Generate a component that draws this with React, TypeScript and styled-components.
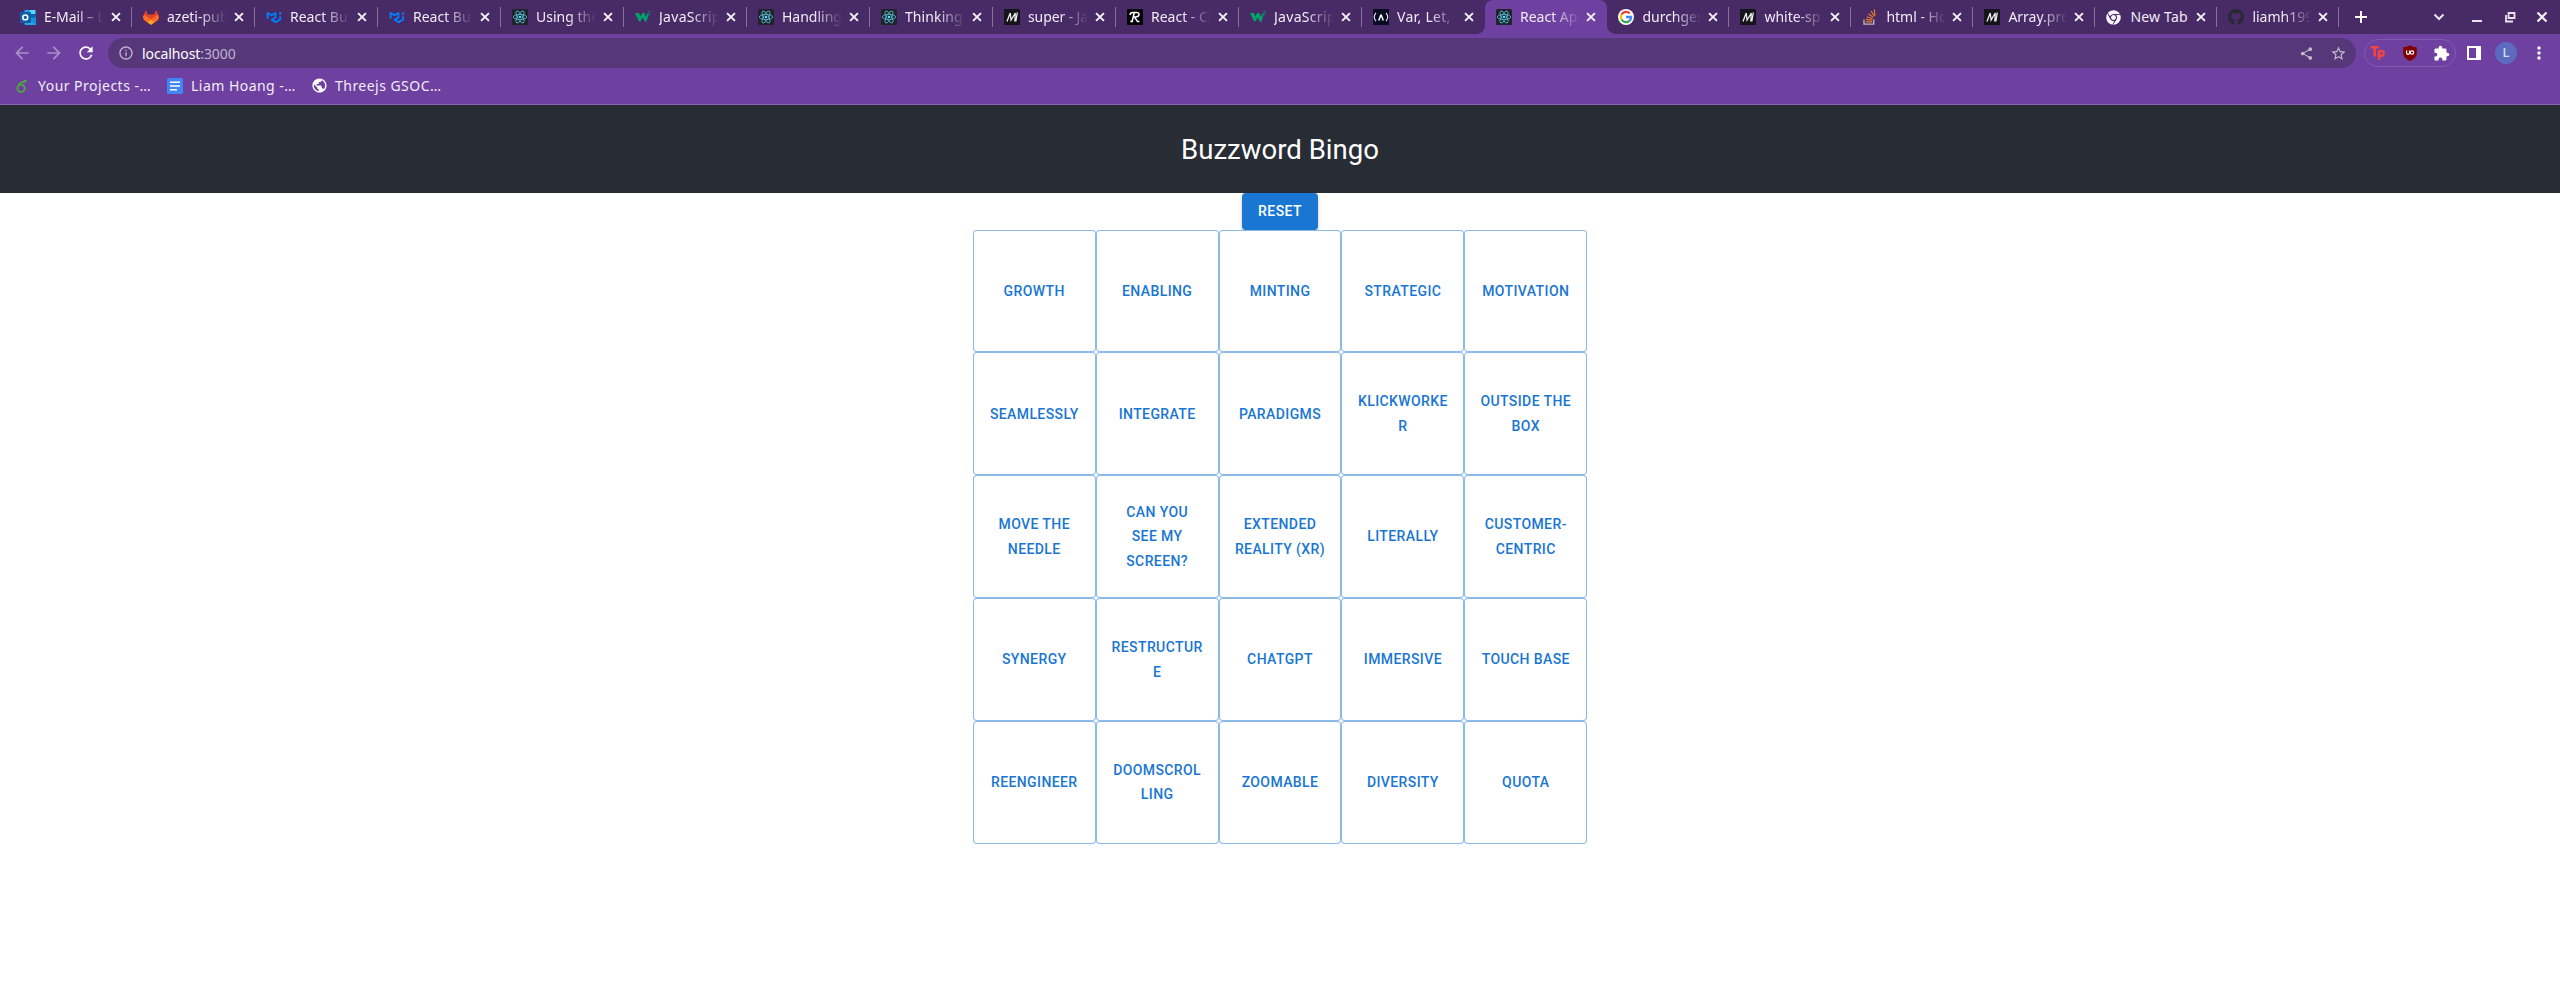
import React from "react";
import styled, { createGlobalStyle, css } from "styled-components";
import {
  MdArrowBack, MdArrowForward, MdRefresh, MdInfoOutline, MdShare, MdStarBorder,
  MdExtension, MdMoreVert, MdPublic,
} from "react-icons/md";
import { FaGithub, FaChrome } from "react-icons/fa";

const GlobalStyle = createGlobalStyle`
  * { box-sizing: border-box; }
  html, body { margin: 0; background: #fff; }
  body { overflow: hidden; }
  svg { display: block; flex: none; }
`;

const uiFont = `"Noto Sans", "Open Sans", sans-serif`;

const Browser = styled.div`
  font-family: ${uiFont};
  font-size: 14px;
  color: #f1ecf6;
`;

/* ---- tab strip ---- */

const TabStrip = styled.div`
  display: flex;
  height: 34px;
  padding-left: 8.6px;
  background: #472a66;
`;

const TabTitle = styled.span<{ $ls: number; $fade: boolean }>`
  flex: 1;
  min-width: 0;
  margin: 0 6px 0 8px;
  overflow: hidden;
  white-space: nowrap;
  line-height: 20px;
  letter-spacing: ${(p) => p.$ls}px;
  ${(p) => p.$fade && css`mask-image: linear-gradient(to right, #000 32px, transparent 60px);`}
`;

const Tab = styled.div<{ $w: number; $active?: boolean; $line?: boolean }>`
  position: relative;
  display: flex;
  align-items: center;
  flex: none;
  width: ${(p) => p.$w}px;
  padding: 0 ${(p) => (p.$w < 123 ? 9 : 8.6)}px 0 11.4px;
  height: 34px;
  ${(p) => p.$line && css`
    &::after {
      content: "";
      position: absolute;
      right: -0.4px;
      top: 7px;
      width: 1px;
      height: 20px;
      background: #85719b;
    }
  `}
  ${(p) => p.$active && css`
    background: #6e41a1;
    border-radius: 8px 8px 0 0;
    &::before, &::after {
      content: "";
      position: absolute;
      bottom: 0;
      width: 8px;
      height: 8px;
    }
    &::before {
      left: -8px;
      background: radial-gradient(circle at 0 0, transparent 7.5px, #6e41a1 8px);
    }
    &::after {
      right: -8px;
      background: radial-gradient(circle at 100% 0, transparent 7.5px, #6e41a1 8px);
    }
  `}
`;

const TabClose = styled.span`
  display: flex;
`;

const NewTab = styled.div`
  display: flex;
  align-items: center;
  margin-left: 14px;
  color: #fff;
`;

const WindowControls = styled.div`
  display: flex;
  align-items: center;
  margin-left: auto;
`;

const ControlSlot = styled.span<{ $w: number }>`
  display: flex;
  justify-content: center;
  width: ${(p) => p.$w}px;
`;

/* ---- toolbar ---- */

const Toolbar = styled.div`
  display: flex;
  align-items: center;
  height: 38px;
  background: #6e41a1;
`;

const NavButtons = styled.div`
  display: flex;
  gap: 12px;
  padding-left: 12px;
  width: 108px;
  color: #fff;
`;

const NavButton = styled.span<{ $off?: boolean }>`
  color: ${(p) => (p.$off ? "#ab8fcb" : "#fff")};
`;

const Omnibox = styled.div`
  display: flex;
  align-items: center;
  width: 2248px;
  height: 30px;
  padding: 0 9px 0 10px;
  border-radius: 15px;
  background: #56377a;
  color: #c0b4cc;
`;

const Url = styled.span`
  flex: 1;
  margin-left: 8px;
  letter-spacing: -0.1px;
  b { font-weight: 400; color: #fff; }
`;

const OmniboxActions = styled.span`
  display: flex;
  align-items: center;
  gap: 16px;
  color: #c3bccb;
`;

const Extensions = styled.div`
  display: flex;
  align-items: center;
  justify-content: space-between;
  width: 92px;
  height: 28px;
  margin-left: 8px;
  padding: 0 5px;
  border: 1px solid #8259b0;
  border-radius: 14px;
  color: #fff;
`;

const Avatar = styled.span`
  display: flex;
  align-items: center;
  justify-content: center;
  width: 22px;
  height: 22px;
  margin: 0 12px 0 14px;
  border-radius: 50%;
  background: #5c6bc0;
  color: #d8dcf0;
  font: 12px Roboto, sans-serif;
  font-weight: 500;
`;

const PanelIcon = styled.span`
  width: 14px;
  height: 14px;
  margin-left: 11px;
  border: 2px solid #fff;
  border-right-width: 5px;
`;

/* ---- bookmarks ---- */

const Bookmarks = styled.div`
  display: flex;
  height: 33px;
  align-items: flex-start;
  padding: 3px 0 0 16px;
  border-bottom: 1px solid #8b67b4;
  background: #6e41a1;
`;

const Bookmark = styled.div<{ $w: number; $gap: number }>`
  display: flex;
  align-items: center;
  gap: ${(p) => p.$gap}px;
  width: ${(p) => p.$w}px;
  height: 21px;
  white-space: nowrap;
  letter-spacing: 0.47px;
`;

/* ---- page ---- */

const Page = styled.main`
  display: flex;
  flex-direction: column;
  align-items: center;
  font-family: Roboto, sans-serif;
`;

const Header = styled.header`
  display: flex;
  align-items: center;
  justify-content: center;
  width: 100%;
  height: 88px;
  background: #282c34;
  color: #fff;
  font-size: 27.56px;
`;

const buttonText = css`
  font: 500 14px/24.5px Roboto, sans-serif;
  letter-spacing: 0.4px;
  text-transform: uppercase;
`;

const ResetButton = styled.button`
  ${buttonText}
  height: 36.5px;
  padding: 6px 16px;
  border: 0;
  border-radius: 4px;
  background: #1976d2;
  color: #fff;
  box-shadow: 0 3px 1px -2px rgba(0, 0, 0, 0.2), 0 2px 2px rgba(0, 0, 0, 0.14),
    0 1px 5px rgba(0, 0, 0, 0.12);
`;

const Board = styled.div`
  display: grid;
  grid-template-columns: repeat(5, 122.88px);
  grid-auto-rows: 122.88px;
`;

const Cell = styled.button`
  ${buttonText}
  padding: 5px 14px;
  border: 1px solid rgba(25, 118, 210, 0.5);
  border-radius: 4px;
  background: #fff;
  color: #1976d2;
  overflow-wrap: anywhere;
  white-space: pre-line;
`;

/* ---- icons ---- */

const Svg = ({ children, size = 16 }: { children: React.ReactNode; size?: number }) => (
  <svg width={size} height={size} viewBox="0 0 16 16">{children}</svg>
);

const OutlookIcon = () => (
  <Svg>
    <path d="M4.500 1h5.500v4H4.500z" fill="#28a8ea" />
    <path d="M10 1h5.500v4H10z" fill="#50d9ff" />
    <path d="M4.500 5h5.500v4H4.500z" fill="#0364b8" />
    <path d="M10 5h5.500v5H10z" fill="#0a64b4" />
    <path d="M4.500 9H16v6a1 1 0 0 1-1 1H5.500a1 1 0 0 1-1-1z" fill="#28a8ea" />
    <path d="M16 7.500V15a1 1 0 0 1-.5.800L9.500 11.500z" fill="#1490df" />
    <rect x="0" y="3" width="11" height="11" rx="1" fill="#0f5ca8" />
    <circle cx="5.300" cy="8.400" r="2.400" fill="none" stroke="#fff" strokeWidth="1.600" />
  </Svg>
);

const GitlabIcon = () => (
  <Svg>
    <path d="M2.700.8L1.200 5 .2 7.500a4.500 4.500 0 0 0 1.500 4L8 15.800l6.300-4.300a4.500 4.500 0 0 0 1.500-4L13.300.8 11.200 5.500H4.800z" fill="#e24329" />
    <path d="M15.800 7.500l-.8-2L8 10.500 1 5.500l-.8 2a4.500 4.500 0 0 0 1.500 4L8 15.800l6.300-4.300a4.500 4.500 0 0 0 1.500-4z" fill="#fc6d26" />
    <path d="M4.500 13.300L8 10.700l3.500 2.600L8 15.800z" fill="#fca326" />
  </Svg>
);

const MuiIcon = () => (
  <Svg>
    <path d="M1.600 9.700V4l3.900 2.300L9.400 4v4.600L5.700 10.800l4 2.300 4.500-2.600V7.300" fill="none" stroke="#007fff" strokeWidth="1.900" strokeLinejoin="round" />
    <path d="M13.200 3.200h2v2.200l-2 .9z" fill="#007fff" />
  </Svg>
);

const ReactIcon = () => (
  <Svg>
    <rect width="16" height="16" rx="1.500" fill="#20232a" />
    <g fill="none" stroke="#53b9d1" strokeWidth=".85">
      <ellipse cx="8" cy="8" rx="6.700" ry="2.600" />
      <ellipse cx="8" cy="8" rx="6.700" ry="2.600" transform="rotate(60 8 8)" />
      <ellipse cx="8" cy="8" rx="6.700" ry="2.600" transform="rotate(120 8 8)" />
    </g>
    <circle cx="8" cy="8" r="1.300" fill="#61dafb" />
  </Svg>
);

const W3Icon = () => (
  <Svg>
    <path d="M0 4h4l1.400 3.600L7 4h2.300l1.700 3.800L12.300 4.500H14L11.300 13 9.600 12 7.500 8.500 5.500 12.500 3.800 12z" fill="#04a06a" />
    <path d="M13 2.500h2.200L14.100 4q1.300.1 1 1.200-.5.900-1.800.4" fill="none" stroke="#048a63" strokeWidth=".8" />
  </Svg>
);

const MdnIcon = () => (
  <Svg>
    <rect width="16" height="16" fill="#15141a" />
    <path d="M3 12.500L6.200 4l.9 7L11.300 4l-.5 8.500M13.300 3.500L11.800 12.500" fill="none" stroke="#ececee" strokeWidth="1.300" />
  </Svg>
);

const RIcon = () => (
  <Svg>
    <rect width="16" height="16" rx="1" fill="#000" />
    <path d="M3 6q0-2.500 3-2.500h3.500q2.700 0 2.500 2.200-.3 2.400-3.500 2.400h-1l3 4.400h2M7.200 4L5 12.700M3.300 12.600h2.800" fill="none" stroke="#fff" strokeWidth="1.500" />
  </Svg>
);

const CampIcon = () => (
  <Svg>
    <rect width="16" height="16" fill="#0a0a23" />
    <path d="M3 3.800q-3.500 4.200 0 8.400M13 3.800q3.500 4.200 0 8.400" fill="none" stroke="#e8e8ee" strokeWidth="1.100" />
    <path d="M5.800 11.500L7.700 6.200h.6l2 5.300" fill="none" stroke="#fff" strokeWidth="1.500" />
  </Svg>
);

const GoogleIcon = () => (
  <Svg>
    <circle cx="8" cy="8" r="8" fill="#fff" />
    <g fill="none" strokeWidth="2.300">
      <path d="M3.500 5.500A5.200 5.200 0 0 1 11.700 4.400" stroke="#ea4335" />
      <path d="M3.500 10.500A5.200 5.200 0 0 1 3.500 5.500" stroke="#fbbc05" />
      <path d="M11.400 11.900A5.200 5.200 0 0 1 3.500 10.500" stroke="#34a853" />
      <path d="M8 8h5.100A5.200 5.200 0 0 1 11.400 11.900" stroke="#4285f4" />
    </g>
  </Svg>
);

const StackIcon = () => (
  <Svg>
    <path d="M2 10.500v4.700h9.800v-4.700" fill="none" stroke="#bcbbbb" strokeWidth="1.300" />
    <path d="M3.800 12.900h6.300M4 10.400l6.200.8M4.700 7.700l5.900 2.100M6.300 4.700l5 3.700M9 2l3.400 5.200M12.200.5l.8 6" stroke="#f48024" strokeWidth="1.100" />
  </Svg>
);

const OverleafIcon = () => (
  <svg width="12" height="14" viewBox="0 0 12 14">
    <circle cx="5" cy="9.300" r="3.700" fill="none" stroke="#4fa83d" strokeWidth="1.800" />
    <path d="M1.400 8.500Q1.600 3.500 6 2.400 8.500.6 11 .7q-.5 3.400-4.500 3.300Q4.500 4 3.400 6" fill="#4fa83d" />
  </svg>
);

const DocsIcon = () => (
  <Svg>
    <rect width="16" height="16" rx="1.500" fill="#4285f4" />
    <path d="M3 4.200h10M3 8h10M3 11.800h7" stroke="#fff" strokeWidth="1.500" />
  </Svg>
);

const TpIcon = () => (
  <Svg>
    <path d="M.8 2.300h8M4.700 2v9.500M9 5.300V15M9 6.700q5-2 4.700 1.700-.4 3.300-4.400 2.200" fill="none" stroke="#f5433f" strokeWidth="2.500" />
  </Svg>
);

const ShieldIcon = () => (
  <Svg>
    <path d="M8 .2q3 1.900 6.800 2v6.300Q14.500 13 8 16 1.500 13 1.200 8.500V2.200Q5 2.100 8 .2z" fill="#800000" />
    <path d="M4.600 5.600v2.800q1.500 2 2.900 0V5.600" fill="none" stroke="#fff" strokeWidth="1.100" />
    <circle cx="10" cy="7.600" r="1.700" fill="none" stroke="#fff" strokeWidth="1.100" />
  </Svg>
);

const CrossIcon = ({ size = 14 }: { size?: number }) => (
  <Svg size={size}><path d="M3.500 3.500l9 9M12.500 3.500l-9 9" stroke="#f6f3f8" strokeWidth="2.200" /></Svg>
);

const IconBox = styled.span`
  display: flex;
  width: 16px;
`;

const GithubIcon = () => <FaGithub size={16} color="#24292e" />;
const ChromeIcon = () => <IconBox><FaChrome size={15} color="#f6f3f8" /></IconBox>;

type TabInfo = {
  icon: React.FC;
  title: string;
  w?: number;
  ls?: number;
  active?: boolean;
  line?: boolean;
  full?: boolean;
};

const tabs: TabInfo[] = [
  { icon: OutlookIcon, title: "E-Mail – L", ls: -0.1 },
  { icon: GitlabIcon, title: "azeti-pub" },
  { icon: MuiIcon, title: "React Bu" },
  { icon: MuiIcon, title: "React Bu" },
  { icon: ReactIcon, title: "Using the" },
  { icon: W3Icon, title: "JavaScrip", ls: 0.3 },
  { icon: ReactIcon, title: "Handling" },
  { icon: ReactIcon, title: "Thinking", ls: 0.1 },
  { icon: MdnIcon, title: "super - Ja", ls: -0.1 },
  { icon: RIcon, title: "React - Ch" },
  { icon: W3Icon, title: "JavaScrip", ls: 0.3 },
  { icon: CampIcon, title: "Var, Let, ", ls: 0.3, line: false },
  { icon: ReactIcon, title: "React App", w: 122.4, active: true, line: false },
  { icon: GoogleIcon, title: "durchges", w: 122 },
  { icon: MdnIcon, title: "white-sp", w: 122 },
  { icon: StackIcon, title: "html - Ho", w: 122 },
  { icon: MdnIcon, title: "Array.pro", w: 122 },
  { icon: ChromeIcon, title: "New Tab", w: 122, ls: 0.2, full: true },
  { icon: GithubIcon, title: "liamh199", w: 122 },
];

const words = [
  "Growth", "Enabling", "Minting", "Strategic", "Motivation",
  "Seamlessly", "Integrate", "Paradigms", "Klickworker", "Outside the box",
  "Move the needle", "Can you\nsee my\nscreen?", "Extended Reality (XR)", "Literally", "Customer-centric",
  "Synergy", "Restructure", "ChatGPT", "Immersive", "Touch base",
  "Reengineer", "Doomscrolling", "Zoomable", "Diversity", "Quota",
];

export default function App() {
  return (
    <>
      <GlobalStyle />
      <Browser>
        <TabStrip>
          {tabs.map((t, i) => (
            <Tab key={i} $w={t.w ?? 123} $active={t.active} $line={t.line !== false}>
              <t.icon />
              <TabTitle $ls={t.ls ?? 0} $fade={!t.full}>{t.title}</TabTitle>
              <TabClose><CrossIcon /></TabClose>
            </Tab>
          ))}
          <NewTab>
            <Svg><path d="M8 2v12M2 8h12" stroke="#fff" strokeWidth="2" /></Svg>
          </NewTab>
          <WindowControls>
            <ControlSlot $w={38}>
              <Svg><path d="M3.500 5.500L8 10l4.500-4.500" fill="none" stroke="#e9e3ef" strokeWidth="2" /></Svg>
            </ControlSlot>
            <ControlSlot $w={38}>
              <Svg><path d="M3 12h10" stroke="#e9e3ef" strokeWidth="2" /></Svg>
            </ControlSlot>
            <ControlSlot $w={28}>
              <Svg><path d="M6.500 4h6v5h-6zM4 6v6.500h7" fill="none" stroke="#e9e3ef" strokeWidth="1.800" /></Svg>
            </ControlSlot>
            <ControlSlot $w={36}><CrossIcon size={16} /></ControlSlot>
          </WindowControls>
        </TabStrip>
        <Toolbar>
          <NavButtons>
            <NavButton $off><MdArrowBack size={20} /></NavButton>
            <NavButton $off><MdArrowForward size={20} /></NavButton>
            <NavButton><MdRefresh size={20} /></NavButton>
          </NavButtons>
          <Omnibox>
            <MdInfoOutline size={16} />
            <Url><b>localhost</b>:3000</Url>
            <OmniboxActions><MdShare size={15} /><MdStarBorder size={17} /></OmniboxActions>
          </Omnibox>
          <Extensions>
            <TpIcon /><ShieldIcon /><MdExtension size={17} />
          </Extensions>
          <PanelIcon />
          <Avatar>L</Avatar>
          <MdMoreVert size={20} color="#fff" />
        </Toolbar>
        <Bookmarks>
          <Bookmark $w={151} $gap={10}><OverleafIcon />Your Projects -…</Bookmark>
          <Bookmark $w={144} $gap={8}><DocsIcon />Liam Hoang -…</Bookmark>
          <Bookmark $w={140} $gap={7}><MdPublic size={17} color="#fff" />Threejs GSOC…</Bookmark>
        </Bookmarks>
      </Browser>
      <Page>
        <Header>Buzzword Bingo</Header>
        <ResetButton>Reset</ResetButton>
        <Board>
          {words.map((w) => <Cell key={w}>{w}</Cell>)}
        </Board>
      </Page>
    </>
  );
}
